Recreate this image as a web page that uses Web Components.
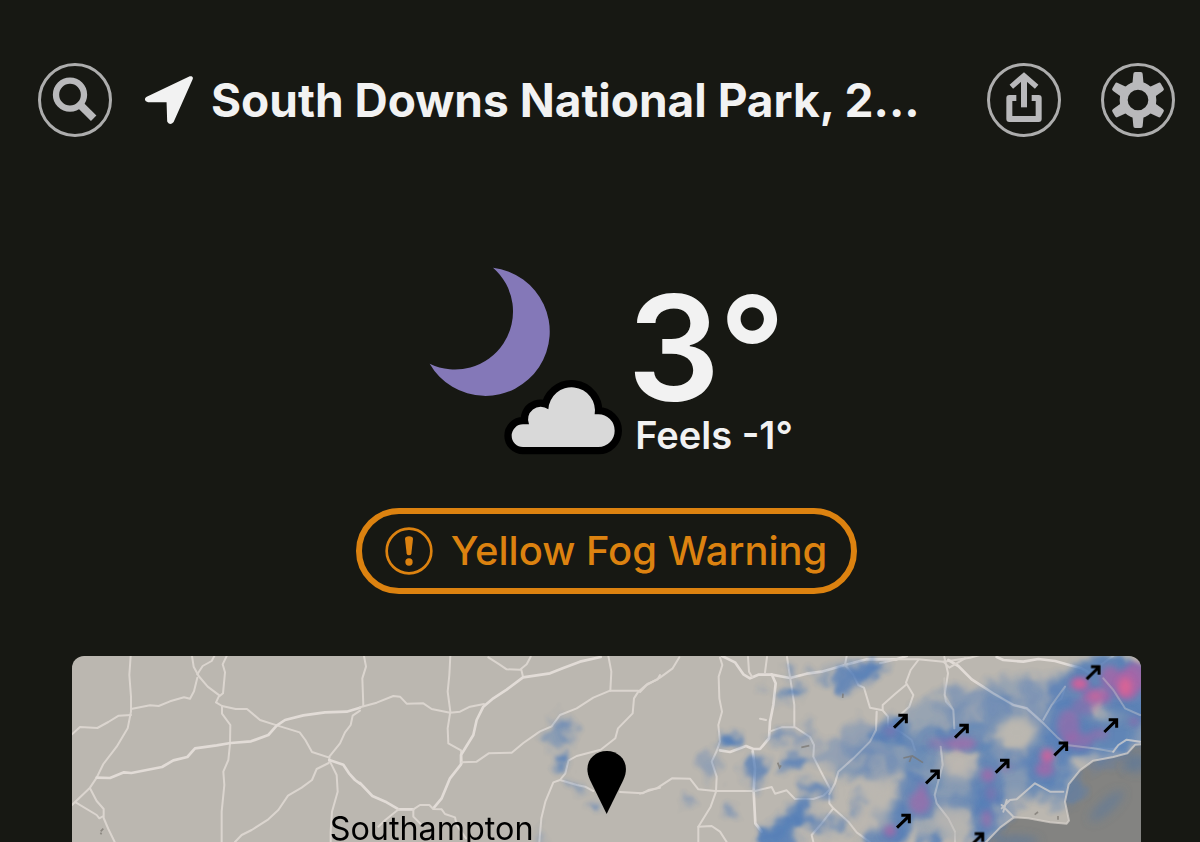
<!DOCTYPE html>
<html lang="en">
<head>
<meta charset="utf-8">
<meta name="viewport" content="width=device-width, initial-scale=1">
<title>Weather</title>
<style>
  body {
    margin: 0;
    background: #171813;
    color: #f2f2f2;
    font-family: Inter, Roboto, sans-serif;
  }
</style>
</head>
<body>
<weather-app></weather-app>

<script>
// attach an open shadow root with the given markup
function mount(el, html) {
  el.attachShadow({ mode: 'open' }).innerHTML = html;
}

class IconButton extends HTMLElement {
  constructor() {
    super();
    mount(this, `
      <style>
        :host { display: block; flex: none; }
        button {
          display: flex;
          width: 74px;
          height: 74px;
          padding: 0;
          align-items: center;
          justify-content: center;
          box-sizing: border-box;
          border: 3px solid #adadad;
          border-radius: 50%;
          background: none;
          color: #b9b9bb;
          cursor: pointer;
        }
      </style>
      <button type="button"><slot></slot></button>
    `);
  }

  connectedCallback() {
    this.shadowRoot.querySelector('button')
      .setAttribute('aria-label', this.getAttribute('label') || '');
  }
}
customElements.define('icon-button', IconButton);

class LocationHeader extends HTMLElement {
  constructor() {
    super();
    mount(this, `
      <style>
        :host { display: flex; align-items: center; padding: 0 25px; }
        svg { display: block; flex: none; }
        .place {
          display: flex;
          flex: 1;
          min-width: 0;
          align-items: center;
          gap: 18px;
          margin: 0 33px;
        }
        h1 {
          margin: 0;
          font-size: 46px;
          line-height: 56px;
          font-weight: 700;
          white-space: nowrap;
        }
        .actions { display: flex; gap: 40px; }
      </style>
      <icon-button label="Search">
        <svg width="68" height="68" viewBox="63 48 204 204" fill="none" stroke="currentColor">
          <circle cx="150" cy="134" r="42" stroke-width="19"/>
          <path d="M181 165L221 205" stroke-width="23"/>
        </svg>
      </icon-button>
      <div class="place">
        <svg width="48" height="50" viewBox="373 78 144 150">
          <path d="M510 88L381 149Q377 152 382 153H444L446 216Q449 221 453 216Z"
            fill="currentColor" stroke="currentColor" stroke-width="13" stroke-linejoin="round"/>
        </svg>
        <h1><slot></slot></h1>
      </div>
      <div class="actions">
        <icon-button label="Share">
          <svg width="68" height="68" viewBox="630 47 204 204" fill="none" stroke="currentColor" stroke-width="18">
            <path d="M732 76V171"/>
            <path d="M694 109L732 76L770 109" stroke-width="16"/>
            <path d="M709 143H688V206H776V143H755" stroke-linejoin="round"/>
          </svg>
        </icon-button>
        <icon-button label="Settings">
          <svg width="68" height="68" viewBox="-102 -102 204 204" fill="currentColor">
            <defs>
              <path id="tooth" d="M-17 -46L-14 -78Q-14 -84 -8 -84H8Q14 -84 14 -78L17 -46Z"/>
            </defs>
            <circle r="43" fill="none" stroke="currentColor" stroke-width="24"/>
            <use href="#tooth"/>
            <use href="#tooth" transform="rotate(60)"/>
            <use href="#tooth" transform="rotate(120)"/>
            <use href="#tooth" transform="rotate(180)"/>
            <use href="#tooth" transform="rotate(240)"/>
            <use href="#tooth" transform="rotate(300)"/>
          </svg>
        </icon-button>
      </div>
    `);
  }
}
customElements.define('location-header', LocationHeader);

class CurrentConditions extends HTMLElement {
  constructor() {
    super();
    mount(this, `
      <style>
        :host { display: flex; justify-content: center; gap: 5px; }
        svg { display: block; flex: none; }
        .reading { padding: 13px 8px 0 0; }
        .temp { font-size: 146px; line-height: 136px; font-weight: 600; }
        .feels { padding-left: 8px; font-size: 38px; line-height: 38px; font-weight: 600; }
      </style>
      <svg width="210" height="188" viewBox="-21 51 630 564" role="img" aria-label="Partly cloudy night">
        <path fill="#8478b8" d="M222 53A193 193 0 1 1 32 341A174 174 0 0 0 222 53Z"/>
        <path fill="#d9d9d9" stroke="#000" stroke-width="44" stroke-linejoin="round" paint-order="stroke"
          d="M312 591A34 34 0 0 1 312 523H330A38 38 0 0 1 388 478A70 70 0 1 1 527 493H538A49 49 0 0 1 538 591Z"/>
      </svg>
      <div class="reading">
        <div class="temp"><slot name="temp"></slot></div>
        <div class="feels"><slot name="feels"></slot></div>
      </div>
    `);
  }
}
customElements.define('current-conditions', CurrentConditions);

class WeatherAlert extends HTMLElement {
  constructor() {
    super();
    mount(this, `
      <style>
        :host { display: flex; justify-content: center; }
        button {
          display: flex;
          align-items: center;
          gap: 18px;
          padding: 13px 24px 13px 23px;
          border: 6px solid #dc8210;
          border-radius: 43px;
          background: none;
          color: #dc8210;
          font: 500 40px/48px Inter, Roboto, sans-serif;
          white-space: nowrap;
          cursor: pointer;
        }
        svg { display: block; flex: none; }
      </style>
      <button type="button">
        <svg width="48" height="48" viewBox="-72 -72 144 144" fill="currentColor">
          <circle r="67" fill="none" stroke="currentColor" stroke-width="8"/>
          <path d="M-12 -36Q-12 -44 0 -44T12 -36L7 8Q6 13 0 13T-7 8Z"/>
          <circle cy="33" r="11"/>
        </svg>
        <slot></slot>
      </button>
    `);
  }
}
customElements.define('weather-alert', WeatherAlert);

// wind arrow positions, in map units
const WIND = [
  [3064, 49], [2486, 195], [2669, 225], [3117, 208], [2967, 278],
  [2791, 330], [2582, 362], [2495, 495], [2715, 550],
];

// rain cells: cx, cy, rx, ry, opacity
const RAIN = [
  [1467, 200, 22, 22, .7], [1465, 240, 46, 28, .5], [1492, 246, 16, 14, .5],
  [1461, 313, 24, 18, 1], [1513, 384, 18, 17, .55], [1574, 449, 20, 16, .7], [1408, 545, 14, 22, .3],
  [1972, 252, 32, 25, 1], [2046, 345, 34, 46, .8], [1912, 330, 32, 42, .4],
  [1856, 437, 15, 14, .6], [1976, 468, 15, 18, .7], [2164, 104, 19, 17, 1],
  [2137, 131, 28, 20, .5], [2071, 97, 12, 14, .3], [2152, 47, 16, 18, .6],
  [2120, 246, 30, 24, .6], [2170, 314, 38, 27, .85], [2250, 62, 28, 18, .5],
  [2320, 70, 30, 44, .85], [2376, 46, 40, 34, .95], [2420, 30, 26, 18, .8],
  [2216, 203, 20, 14, .35], [2190, 245, 38, 26, .45], [2214, 402, 34, 28, .7],
  [2256, 400, 28, 22, .7], [2140, 507, 32, 32, 1], [2186, 478, 32, 42, 1],
  [2230, 498, 28, 22, .7], [2293, 511, 32, 24, .6], [2372, 426, 26, 18, .7],
  [2342, 463, 20, 15, .6], [2090, 541, 40, 32, 1], [2134, 560, 50, 22, .9],
  [2365, 255, 60, 60, .4], [2280, 295, 70, 34, .4], [2376, 286, 42, 30, .5],
  [2350, 345, 60, 26, .5], [2420, 330, 60, 50, .4], [2455, 230, 52, 42, .95], [2500, 290, 80, 60, .5],
  [2600, 190, 95, 65, .35], [2570, 248, 90, 38, .6], [2680, 250, 90, 45, .75],
  [2720, 160, 110, 70, .38], [2820, 110, 90, 50, .35], [2780, 180, 60, 50, .5], [2660, 125, 80, 36, .25],
  [2760, 290, 70, 44, .6], [2560, 340, 66, 70, .55], [2530, 420, 58, 68, .8],
  [2470, 500, 60, 60, .9], [2430, 550, 70, 36, .8], [2580, 550, 30, 22, .9],
  [2670, 410, 100, 60, .5], [2700, 440, 60, 34, .5], [2745, 380, 50, 90, .7],
  [2740, 470, 44, 80, .8], [2724, 545, 44, 34, .7], [2850, 370, 120, 60, .55],
  [2600, 490, 80, 70, .25], [2860, 310, 60, 50, .45],
  [2790, 455, 50, 40, .4], [2930, 310, 80, 90, .75], [2960, 400, 80, 52, .5],
  [3000, 220, 84, 90, .85], [3000, 110, 76, 60, .8], [3100, 60, 110, 60, .9],
  [3180, 110, 90, 90, .9], [3070, 240, 120, 66, .75], [3150, 220, 80, 80, .6],
  [2920, 140, 80, 80, .4], [2890, 190, 50, 50, .3], [3100, 320, 70, 24, .3],
];

// heavier cores, drawn over the rain
const HEAVY = [
  [2455, 226, 20, 16, .3], [2668, 262, 46, 20, .65], [2600, 262, 34, 18, .35],
  [2543, 440, 32, 34, .6], [2550, 400, 14, 22, .5], [2454, 525, 18, 18, .8],
  [2748, 358, 20, 20, .75], [2756, 412, 16, 24, .35], [2744, 488, 14, 28, .6],
  [2800, 334, 16, 12, .4], [2926, 300, 20, 22, .9], [2918, 340, 28, 22, .75],
  [2990, 210, 34, 50, .55], [3020, 254, 44, 24, .55], [3080, 234, 30, 16, .5],
  [3023, 83, 28, 19, 1], [3076, 120, 44, 25, .85], [3114, 64, 28, 34, .8],
  [3165, 85, 40, 46, .95], [3190, 62, 36, 44, .8], [3040, 150, 40, 26, .4], [3186, 196, 16, 14, .5],
];

// gaps of dry land inside the rain band
const DRY = [
  [2835, 230, 58, 44, .95], [2660, 334, 56, 34, .65], [2640, 490, 56, 34, .7],
  [2400, 405, 56, 32, .85], [2430, 440, 34, 40, .85], [2400, 500, 60, 24, .7], [2660, 530, 30, 36, .6],
  [3110, 183, 70, 14, .35], [2830, 420, 30, 18, .3],
];

const blobs = (list, fill) => list.map(([x, y, rx, ry, o]) =>
  `<ellipse cx="${x}" cy="${y}" rx="${rx}" ry="${ry}" fill="${fill}" opacity="${o}"/>`).join('');

class RadarMap extends HTMLElement {
  constructor() {
    super();
    mount(this, `
      <style>
        :host {
          display: block;
          overflow: hidden;
          border-radius: 12px 12px 0 0;
          background: #bbb7b0;
        }
        svg { display: block; width: 100%; height: 100%; }
        .roads { fill: none; stroke: #dbd5cf; stroke-width: 6; stroke-linejoin: round; stroke-linecap: round; }
        .main { stroke: #e2dcd7; stroke-width: 8; }
        text { font-size: 97px; fill: #000; }
      </style>
      <svg viewBox="0 0 3207 558" preserveAspectRatio="xMidYMin slice" role="img" aria-label="Rain radar">
        <defs>
          <filter id="soft" x="-10%" y="-30%" width="120%" height="160%"><feGaussianBlur stdDeviation="14"/></filter>
          <filter id="cell" x="-10%" y="-30%" width="120%" height="160%">
            <feGaussianBlur stdDeviation="11" result="b"/>
            <feTurbulence type="fractalNoise" baseFrequency=".018" numOctaves="2" seed="4" result="n"/>
            <feDisplacementMap in="b" in2="n" scale="70" xChannelSelector="R" yChannelSelector="G"/>
            <feGaussianBlur stdDeviation="3"/>
          </filter>
          <filter id="core" x="-10%" y="-30%" width="120%" height="160%"><feGaussianBlur stdDeviation="9"/></filter>
          <g id="wind" fill="none" stroke="#000" stroke-width="9">
            <path d="M-20 20L18 -17M-7 -17H17V7"/>
          </g>
        </defs>

        <!-- sea -->
        <path transform="translate(2424 -33)" fill="#838381"
          d="M800 293L766 299L742 325L700 336L640 347L600 376L566 418L555 470L567 527L560 536L510 532L445 520L402 517L360 548L310 600H800Z"/>

        <!-- west -->
        <g class="roads" transform="translate(-36 -33)">
          <path d="M212 33L208 90L213 155V200L203 250L170 305L130 357L110 398L90 428L36 480"/>
          <path d="M36 268L60 246L112 249L145 231L176 212L213 210"/>
          <path d="M213 192L270 181L296 183L330 169L372 157L390 161L402 139L412 98"/>
          <path d="M396 33L401 65L416 93L443 125L478 151L468 172L486 183L527 192H561L600 225L653 242L719 262L736 285L756 321L808 338"/>
          <path d="M463 33L455 48L428 63L412 88M500 33L488 58L495 82L489 145L479 153"/>
          <path d="M486 184V206L511 240L510 297L505 345L490 380L493 420L485 500V591"/>
          <path class="main" d="M110 398L150 399L192 382L214 384L306 366L340 346L382 336L405 310L470 301L512 294L573 289L625 270L650 242L675 225L730 211L795 202L860 200L900 188"/>
          <path d="M900 197L878 212L872 240L855 262L840 295L808 335L808 350"/>
          <path d="M806 354L770 372L756 405L725 428L684 452L655 495L625 523L575 555L545 570L525 591"/>
          <path d="M810 350L830 390L833 440L816 500L812 560V591"/>
          <path class="main" d="M808 345L850 359L867 385L885 405L900 416"/>
          <path d="M90 430L110 468L131 492V519L145 552L164 591M47 472L110 510L118 520L130 513"/>
        </g>

        <!-- centre -->
        <g class="roads" transform="translate(864 -33)">
          <path d="M12 33L18 65L7 100L10 182"/>
          <path d="M0 187L50 173L100 153L120 155L140 176L190 175L215 192L270 203L300 200L330 185L372 177"/>
          <path d="M271 33L268 90L263 140L271 200L263 250L265 295L303 316L305 355"/>
          <path d="M385 37L418 58L440 73L480 74L500 58L512 35M484 74L489 95"/>
          <path class="main" d="M722 36L660 50L610 69L570 85L489 97L440 134L400 160L370 185L350 225L340 270L303 330V358L270 400L245 460L220 490"/>
          <path d="M305 352L350 350L386 325L455 323L490 294L540 259L575 244L600 210L650 190L700 158L750 137H835"/>
          <path d="M745 33L754 80L751 137"/>
          <path d="M900 90L892 104L862 117L835 140L822 160L818 205L774 250L766 280L722 314L650 333L625 347L616 385L600 405L580 412L556 470L544 520L538 591"/>
          <path d="M600 405L650 420L675 425L700 438M780 441L848 445L865 435L900 428"/>
          <path class="main" d="M0 414L37 453L80 472L116 493H160"/>
          <path d="M116 493L75 526L55 545M160 493L180 480H208L220 492L245 493L255 507L285 517L290 540L318 580M160 493V515L185 540"/>
        </g>

        <!-- east -->
        <g class="roads" transform="translate(1704 -33)">
          <path d="M118 37L98 70L60 98L20 120L0 141"/>
          <path class="main" d="M246 33L285 52L310 88L330 100L355 89H395L450 99L500 86L545 80L615 60L680 43H770L800 33"/>
          <path d="M240 38L247 60L236 95L238 160L246 200L235 240L240 290L230 318L215 350L230 395L228 440L212 485L175 545V591"/>
          <path class="main" d="M395 88L407 115L400 180L390 230L387 280L360 312H340L318 303L270 321L240 316"/>
          <path class="main" d="M338 318L345 370L341 440L346 535L365 560"/>
          <path d="M0 446L50 430L96 400L150 401L175 433L225 438H345L395 426L405 446L440 436L465 462H520L550 452L568 435"/>
          <path d="M324 36L327 80L337 97M381 36L375 82M441 36L450 95L463 180V246M390 259L425 247H466L510 276L522 300L520 335L548 390L572 435"/>
          <path d="M615 60L640 90L655 120L672 128L690 188L728 196V180L765 147L800 118M835 45L812 75L798 113L820 150L808 185L780 210"/>
          <path d="M710 200L708 255L690 290L640 340L595 380L585 415L568 447V475L580 490L625 530L650 562L690 591M580 490L545 535L515 570L520 591M175 545L215 543L240 560L260 591"/>
          <path d="M728 196L744 215V245L780 260L815 285L825 315M615 60L620 33M360 221L378 225"/>
        </g>

        <g class="roads" transform="translate(2424 -33)">
          <path d="M0 55L50 43H115L190 50L270 38L300 30"/>
          <path class="main" d="M205 45L235 63L275 103L340 145L400 180L440 190L485 230L530 275"/>
          <path class="main" d="M350 36L370 45L430 50L475 42L525 48L570 61L605 70L630 85"/>
          <path d="M193 36L204 85L194 150L198 170L220 195L223 250M190 50L208 68L255 40"/>
          <path d="M490 224L515 180L545 160L555 125M670 100L700 135L735 190L780 210M630 85L675 50L700 33"/>
          <path d="M182 305L188 360L164 450L170 475L205 520L225 560V591"/>
          <path d="M530 275L560 300L640 310L700 312L740 284L780 290"/>
        </g>

        <!-- precipitation -->
        <g filter="url(#cell)" opacity=".92">${blobs(RAIN, '#4f7bb8')}</g>
        <g filter="url(#soft)">${blobs(DRY, '#bbb7b0')}</g>
        <g filter="url(#soft)" fill="#56779f">
          <ellipse cx="3104" cy="450" rx="66" ry="20" opacity=".5" transform="rotate(-42 3104 450)"/>
          <ellipse cx="3190" cy="320" rx="34" ry="30" opacity=".6"/>
          <ellipse cx="2830" cy="556" rx="70" ry="16" opacity=".6"/>
        </g>
        <g filter="url(#core)">${blobs(HEAVY, '#a865a8')}</g>
        <g filter="url(#core)" fill="#dc6494">
          <ellipse cx="3023" cy="83" rx="18" ry="11"/>
          <ellipse cx="3160" cy="92" rx="20" ry="28" opacity=".9"/>
          <ellipse cx="3070" cy="120" rx="18" ry="10" opacity=".7"/>
          <ellipse cx="2926" cy="300" rx="14" ry="15" opacity=".7"/>
        </g>

        <!-- coast and roads showing through the rain -->
        <g class="roads" opacity=".7" transform="translate(2424 -33)">
          <path d="M785 298L766 299L742 325L700 336L640 347L600 376L566 418L555 470L567 527L560 536L510 532L445 520L402 517L360 548L310 600"/>
          <path d="M365 490L390 465L410 463L465 415L510 440H550M365 480L395 510L402 517M380 465L370 500M700 320L715 300L740 284L780 290"/>
        </g>
        <g class="roads" opacity=".35" transform="translate(2424 -33)">
          <path d="M275 103L340 145L400 180L440 190L485 230L530 275L560 300L640 310L700 320"/>
          <path d="M193 100L194 150L220 195L223 250M490 224L515 180L555 125M670 100L700 135L735 190L780 210"/>
          <path d="M-10 200L-12 255L-30 290L-80 340L-125 380L-135 415L-152 447M182 305L188 360L164 450L170 475L205 520L225 560"/>
        </g>

        <!-- built-up smudges -->
        <g fill="none" stroke="#77736d" stroke-width="5" opacity=".7">
          <path d="M86 526L94 518M88 530L86 535M2312 126L2313 113M2188 274L2212 269M2117 320L2123 335L2127 328M2494 306L2521 300L2553 320M2519 300L2512 318M2888 476L2898 468M2958 480V491"/>
        </g>

        ${WIND.map(([x, y]) => `<use href="#wind" x="${x}" y="${y}"/>`).join('')}
        <path d="M1604 474L1554 372C1530 320 1565 285 1604 285S1678 320 1654 372Z"/>
        <text x="773" y="551">${this.getAttribute('place') || ''}</text>
      </svg>
    `);
  }
}
customElements.define('radar-map', RadarMap);

class WeatherApp extends HTMLElement {
  constructor() {
    super();
    mount(this, `
      <style>
        :host {
          display: flex;
          flex-direction: column;
          height: 100vh;
          box-sizing: border-box;
          padding: 63px 0 0 13px;
          overflow: hidden;
        }
        current-conditions { margin-top: 130px; }
        weather-alert { margin-top: 53px; }
        radar-map { flex: 1; min-height: 0; margin: 62px 59px 0; }
      </style>
      <location-header>South Downs National Park, 2...</location-header>
      <current-conditions>
        <span slot="temp">3°</span>
        <span slot="feels">Feels -1°</span>
      </current-conditions>
      <weather-alert>Yellow Fog Warning</weather-alert>
      <radar-map place="Southampton"></radar-map>
    `);
  }
}
customElements.define('weather-app', WeatherApp);
</script>
</body>
</html>
